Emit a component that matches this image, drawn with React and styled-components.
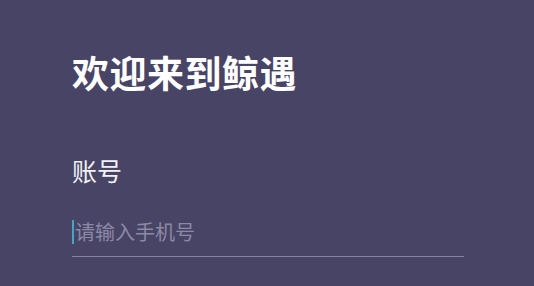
import React from "react";
import styled, { createGlobalStyle } from "styled-components";

const Global = createGlobalStyle`
  html, body { margin: 0; padding: 0; background: #484466; }
  body { font-family: "Noto Sans CJK SC", "Noto Sans", sans-serif; }
`;

const Page = styled.div`
  width: 534px;
  height: 286px;
  background: #484466;
  box-sizing: border-box;
  padding: 50px 70px 0 72px;
  display: flex;
  flex-direction: column;
`;

const Title = styled.h1`
  margin: 0;
  font-size: 37px;
  line-height: 44px;
  letter-spacing: 0.5px;
  font-weight: 700;
  color: #ffffff;
`;

const Label = styled.div`
  margin-top: 60px;
  font-size: 25px;
  line-height: 32px;
  color: #f2f2f5;
`;

const Field = styled.div`
  margin-top: 22px;
  display: flex;
  align-items: center;
  height: 48px;
  border-bottom: 1px solid #86829f;
`;

const Caret = styled.span`
  width: 2px;
  height: 24px;
  background: #4ba3bd;
  margin-right: 1px;
`;

const Placeholder = styled.span`
  font-size: 20px;
  line-height: 28px;
  color: #8c89a5;
`;

export default function App() {
  return (
    <>
      <Global />
      <Page>
        <Title>欢迎来到鲸遇</Title>
        <Label>账号</Label>
        <Field>
          <Caret />
          <Placeholder>请输入手机号</Placeholder>
        </Field>
      </Page>
    </>
  );
}
